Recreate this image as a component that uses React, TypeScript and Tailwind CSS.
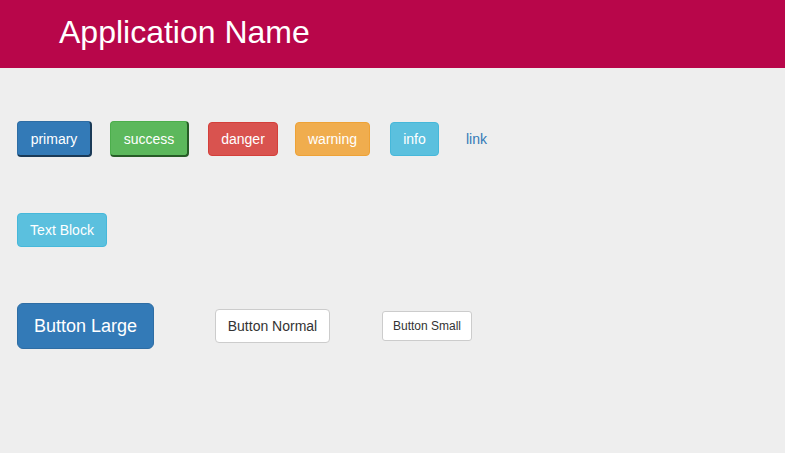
import React from "react";

const font = { fontFamily: '"Liberation Sans", Arial, sans-serif' };

export default function App() {
  return (
    <div className="min-h-[453px] w-full bg-[#eeeeee]" style={font}>
      <div className="h-[68px] bg-[#b8064a] pl-[59px] pt-[14px]">
        <h1 className="text-[32px] leading-[36px] text-white font-normal">Application Name</h1>
      </div>

      <div className="mt-[53px] flex h-[36px] items-center pl-[17px] text-[14px] text-white">
        <button className="h-[36px] w-[75px] rounded-[4px] border-l border-t border-r-2 border-b-2 border-l-[#2e6da4] border-t-[#2e6da4] border-r-[#1a3a57] border-b-[#1a3a57] bg-[#337ab7] leading-[20px]">
          primary
        </button>
        <button className="ml-[18px] h-[36px] w-[79px] rounded-[4px] border-l border-t border-r-2 border-b-2 border-l-[#4cae4c] border-t-[#4cae4c] border-r-[#275c27] border-b-[#275c27] bg-[#5cb85c] leading-[20px]">
          success
        </button>
        <button className="ml-[19px] h-[34px] w-[70px] rounded-[4px] border border-[#d43f3a] bg-[#d9534f] leading-[20px]">
          danger
        </button>
        <button className="ml-[17px] h-[34px] w-[75px] rounded-[4px] border border-[#eea236] bg-[#f0ad4e] leading-[20px]">
          warning
        </button>
        <button className="ml-[20px] h-[34px] w-[49px] rounded-[4px] border border-[#46b8da] bg-[#5bc0de] leading-[20px]">
          info
        </button>
        <button className="ml-[15px] h-[34px] px-3 leading-[20px] text-[#337ab7]">link</button>
      </div>

      <div className="mt-[56px] flex pl-[17px]">
        <div className="flex h-[34px] w-[90px] items-center justify-center rounded-[4px] border border-[#46b8da] bg-[#5bc0de] text-[14px] leading-[20px] text-white">
          Text Block
        </div>
      </div>

      <div className="mt-[56px] flex items-center pl-[17px]">
        <button className="h-[46px] w-[137px] rounded-[6px] border border-[#2e6da4] bg-[#337ab7] text-[18px] leading-[24px] text-white">
          Button Large
        </button>
        <button className="ml-[61px] h-[34px] w-[115px] rounded-[4px] border border-[#cccccc] bg-white text-[14px] leading-[20px] text-[#333333]">
          Button Normal
        </button>
        <button className="ml-[52px] h-[30px] w-[90px] rounded-[3px] border border-[#cccccc] bg-white text-[12px] leading-[18px] text-[#333333]">
          Button Small
        </button>
      </div>
    </div>
  );
}
